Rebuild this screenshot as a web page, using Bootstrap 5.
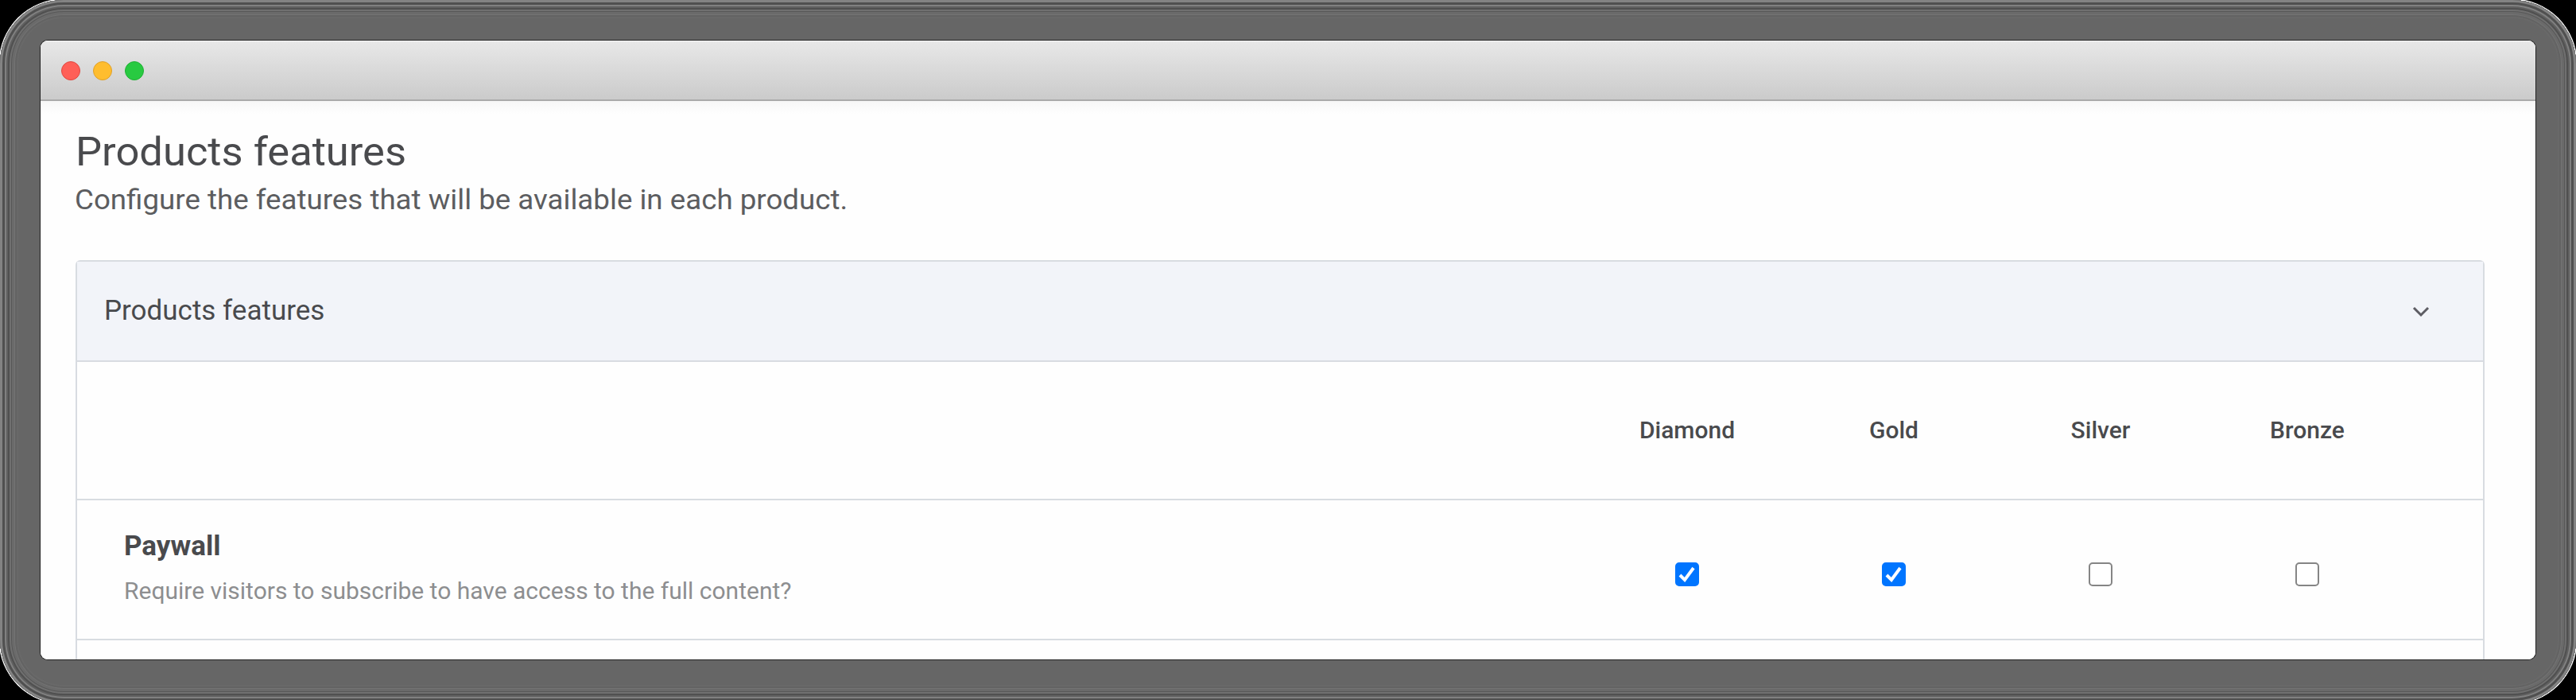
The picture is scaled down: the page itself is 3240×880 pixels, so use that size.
<!DOCTYPE html>
<html lang="en"><head><meta charset="utf-8"><title>Products features</title>
<link href="https://cdn.jsdelivr.net/npm/bootstrap@5.3.0/dist/css/bootstrap.min.css" rel="stylesheet">
<style>
html,body{height:880px;background:#000;overflow:hidden}
body{font-family:Roboto,"Liberation Sans",sans-serif;color:#494a4d}
.shade{height:884px;padding:51px;border-radius:80px;background:#666;box-shadow:0 0 0 1.5px #fff,inset 0 0 0 3px #838383,inset 0 0 0 6px #505050,inset 0 0 0 8px #808080,inset 0 0 0 10px #606060,inset 0 0 0 12px #505050,inset 0 0 0 14px #707070,inset 0 0 0 15px #585858,inset 0 0 0 18px #6a6a6a,inset 0 0 0 19px #737373,inset 0 0 0 21px #636363,inset 0 0 0 23px #696969}
.window{height:778px;border-radius:9px;background:#fefefe;box-shadow:0 0 0 1px #222}
.titlebar{height:76px;padding:2px 0 0 26px;gap:16px;background:linear-gradient(#e8e8e8,#cbcbcb);border-bottom:2px solid #aaa;box-shadow:inset 0 1px #f5f5f5}
.dot{width:24px;height:24px;border-radius:50%;border:1px solid}
.page{height:702px;padding:36px 64px 0 44px;background:linear-gradient(#f7f7f7,#fefefe 16px)}
.page h1,.intro{margin:0;white-space:nowrap}
.page h1{font-size:50px;line-height:56px}
.intro{font-size:34.5px;line-height:44px;color:#5c5d60;padding-top:10px}
.wide{display:inline-block;transform:scaleX(1.05);transform-origin:left}
.intro .wide{transform:scaleX(1.064);margin-left:-1px}
.features{height:600px;margin-top:54px;border:2px solid #d8dce1;border-radius:6px 6px 0 0;background:#fefefe;border-bottom:0}
.features-head{height:126px;background:#f2f4f9;border-bottom:2px solid #d8dce1;padding:1px 67px 0 34px;font-size:35px}
.line{border-bottom:2px solid #d8dce1;padding-right:91px}
.names{height:174px;padding-bottom:2px}.paywall{height:176px;padding-left:59px}
.cell{width:260px;text-align:center;font-size:30px;font-weight:500}
.cell .form-check-input{width:30px;height:30px;display:block;margin:11px auto 0;border:2px solid #858585;border-radius:5px}
.cell .form-check-input:checked{background-color:#0075ff;border-color:#0075ff;background-size:26px;background-image:url("data:image/svg+xml,%3Csvg xmlns='http://www.w3.org/2000/svg' viewBox='0 0 26 26'%3E%3Cpath d='M4 14l6 6L21 5' fill='none' stroke='white' stroke-width='4'/%3E%3C/svg%3E")}
.feature-name{font-size:35px;line-height:48px;font-weight:700}
.feature-note{font-size:30px;line-height:40px;color:#8d8e90;margin:12px 0 7px}
</style></head><body>
<div class="shade"><main class="window overflow-hidden">
<div class="titlebar d-flex align-items-center"><span class="dot" style="background:#ff5f57;border-color:#e2463f"></span><span class="dot" style="background:#ffbd2e;border-color:#e0a028"></span><span class="dot" style="background:#28ca41;border-color:#1fb034"></span></div>
<div class="page"><h1 class="fw-normal"><span class="wide">Products features</span></h1><p class="intro"><span class="wide">Configure the features that will be available in each product.</span></p>
<section class="features"><div class="features-head d-flex align-items-center justify-content-between"><span>Products features</span><svg width="22" height="14" viewBox="0 0 22 14" fill="none" stroke="#5d5c63" stroke-width="3"><path d="M2 2l9 9 9-9"/></svg></div>
<div class="line names d-flex align-items-center justify-content-end"><div class="cell">Diamond</div><div class="cell">Gold</div><div class="cell">Silver</div><div class="cell">Bronze</div></div>
<div class="line paywall d-flex align-items-center"><div class="me-auto"><div class="feature-name">Paywall</div><div class="feature-note">Require visitors to subscribe to have access to the full content?</div></div>
<div class="cell"><input class="form-check-input" type="checkbox" checked aria-label="Diamond"></div><div class="cell"><input class="form-check-input" type="checkbox" checked aria-label="Gold"></div><div class="cell"><input class="form-check-input" type="checkbox" aria-label="Silver"></div><div class="cell"><input class="form-check-input" type="checkbox" aria-label="Bronze"></div></div>
</section></div></main></div>
<script src="https://cdn.jsdelivr.net/npm/bootstrap@5.3.0/dist/js/bootstrap.bundle.min.js"></script>
</body></html>
